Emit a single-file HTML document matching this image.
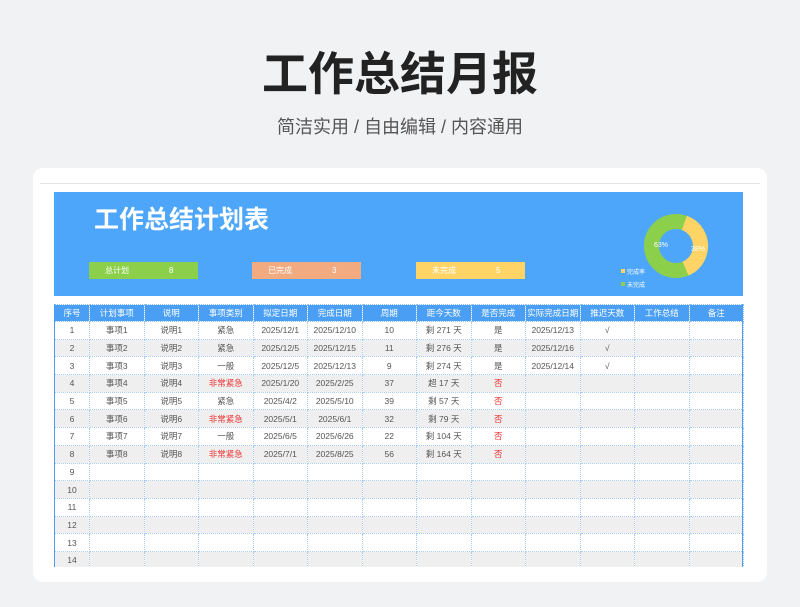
<!DOCTYPE html><html><head><meta charset="utf-8"><style>
body{margin:0;width:800px;height:607px;background:#f1f2f4;font-family:"Liberation Sans","Noto Sans CJK SC",sans-serif;position:relative;overflow:hidden}
.t{position:absolute;left:0;width:800px;text-align:center}
.card{position:absolute;left:33px;top:168px;width:734px;height:414px;background:#fff;border-radius:10px}
.ban{position:absolute;left:54px;top:192px;width:689px;height:104px;background:#4da6fa}
.box{position:absolute;top:262px;height:17px;width:109px;font-size:8px;color:#fff;line-height:17px}
table{position:absolute;left:54px;top:304px;border-collapse:collapse;table-layout:fixed;font-size:8.5px;color:#555}
td{height:16.7px;padding:0;text-align:center;border:1px dotted #a9cdf2;overflow:hidden;white-space:nowrap}
tr.h td{background:#4a9ff5;color:#fff;height:16px;border-color:#8cc3f8}
tr.g td{background:#efefef}
.r{color:#e33}
</style></head><body>
<div class="t" style="top:38px;font-size:46px;font-weight:bold;color:#222">工作总结月报</div>
<div class="t" style="top:113px;font-size:18px;color:#555">简洁实用 / 自由编辑 / 内容通用</div>
<div class="card"></div>
<div style="position:absolute;left:40px;top:183px;width:720px;border-top:1px solid #e4e4e4"></div>
<div class="ban"></div>
<div style="position:absolute;left:94px;top:200px;font-size:25px;font-weight:bold;color:#fff">工作总结计划表</div>
<div class="box" style="left:89px;background:#8bcf4a"><span style="margin-left:16px">总计划</span><span style="position:absolute;left:80px">8</span></div>
<div class="box" style="left:252px;background:#f2ab81"><span style="margin-left:16px">已完成</span><span style="position:absolute;left:80px">3</span></div>
<div class="box" style="left:416px;background:#fed466"><span style="margin-left:16px">未完成</span><span style="position:absolute;left:80px">5</span></div>
<svg style="position:absolute;left:600px;top:200px" width="140" height="96">
<circle cx="76" cy="46" r="24.5" fill="none" stroke="#8bcf4a" stroke-width="15"/>
<circle cx="76" cy="46" r="24.5" fill="none" stroke="#fed466" stroke-width="15" stroke-dasharray="58.5 200" transform="rotate(-70 76 46)"/>
<text x="54" y="47" font-size="7" fill="#fff">63%</text><text x="91" y="51" font-size="7" fill="#fff">38%</text>
<rect x="21" y="69" width="4" height="4" fill="#fed466"/><text x="27" y="74" font-size="6" fill="#fff">完成率</text>
<rect x="21" y="82" width="4" height="4" fill="#8bcf4a"/><text x="27" y="87" font-size="6" fill="#fff">未完成</text>
</svg>
<table>
<colgroup><col style="width:35px"><col span="12" style="width:54.5px"></colgroup>
<tr class="h"><td>序号</td><td>计划事项</td><td>说明</td><td>事项类别</td><td>拟定日期</td><td>完成日期</td><td>周期</td><td>距今天数</td><td>是否完成</td><td>实际完成日期</td><td>推迟天数</td><td>工作总结</td><td>备注</td></tr>
<tr><td>1</td><td>事项1</td><td>说明1</td><td>紧急</td><td>2025/12/1</td><td>2025/12/10</td><td>10</td><td>剩 271 天</td><td>是</td><td>2025/12/13</td><td>√</td><td></td><td></td></tr>
<tr class="g"><td>2</td><td>事项2</td><td>说明2</td><td>紧急</td><td>2025/12/5</td><td>2025/12/15</td><td>11</td><td>剩 276 天</td><td>是</td><td>2025/12/16</td><td>√</td><td></td><td></td></tr>
<tr><td>3</td><td>事项3</td><td>说明3</td><td>一般</td><td>2025/12/5</td><td>2025/12/13</td><td>9</td><td>剩 274 天</td><td>是</td><td>2025/12/14</td><td>√</td><td></td><td></td></tr>
<tr class="g"><td>4</td><td>事项4</td><td>说明4</td><td class="r">非常紧急</td><td>2025/1/20</td><td>2025/2/25</td><td>37</td><td>超 17 天</td><td class="r">否</td><td></td><td></td><td></td><td></td></tr>
<tr><td>5</td><td>事项5</td><td>说明5</td><td>紧急</td><td>2025/4/2</td><td>2025/5/10</td><td>39</td><td>剩 57 天</td><td class="r">否</td><td></td><td></td><td></td><td></td></tr>
<tr class="g"><td>6</td><td>事项6</td><td>说明6</td><td class="r">非常紧急</td><td>2025/5/1</td><td>2025/6/1</td><td>32</td><td>剩 79 天</td><td class="r">否</td><td></td><td></td><td></td><td></td></tr>
<tr><td>7</td><td>事项7</td><td>说明7</td><td>一般</td><td>2025/6/5</td><td>2025/6/26</td><td>22</td><td>剩 104 天</td><td class="r">否</td><td></td><td></td><td></td><td></td></tr>
<tr class="g"><td>8</td><td>事项8</td><td>说明8</td><td class="r">非常紧急</td><td>2025/7/1</td><td>2025/8/25</td><td>56</td><td>剩 164 天</td><td class="r">否</td><td></td><td></td><td></td><td></td></tr>
<tr><td>9</td><td></td><td></td><td></td><td></td><td></td><td></td><td></td><td></td><td></td><td></td><td></td><td></td></tr>
<tr class="g"><td>10</td><td></td><td></td><td></td><td></td><td></td><td></td><td></td><td></td><td></td><td></td><td></td><td></td></tr>
<tr><td>11</td><td></td><td></td><td></td><td></td><td></td><td></td><td></td><td></td><td></td><td></td><td></td><td></td></tr>
<tr class="g"><td>12</td><td></td><td></td><td></td><td></td><td></td><td></td><td></td><td></td><td></td><td></td><td></td><td></td></tr>
<tr><td>13</td><td></td><td></td><td></td><td></td><td></td><td></td><td></td><td></td><td></td><td></td><td></td><td></td></tr>
<tr class="g"><td>14</td><td></td><td></td><td></td><td></td><td></td><td></td><td></td><td></td><td></td><td></td><td></td><td></td></tr>
</table>
<div style="position:absolute;left:54px;top:304px;width:1px;height:264px;background:#4a9ff5"></div>
<div style="position:absolute;left:742px;top:304px;width:1px;height:264px;background:#4a9ff5"></div>
<div style="position:absolute;left:33px;top:567px;width:734px;height:15px;background:#fff;border-radius:0 0 10px 10px"></div>
</body></html>
